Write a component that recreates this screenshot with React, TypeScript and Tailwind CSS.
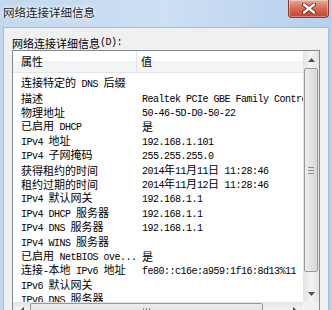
import React from "react";

const rows: [string, string][] = [
  ["连接特定的 DNS 后缀", ""],
  ["描述", "Realtek PCIe GBE Family Controller"],
  ["物理地址", "50-46-5D-D0-50-22"],
  ["已启用 DHCP", "是"],
  ["IPv4 地址", "192.168.1.101"],
  ["IPv4 子网掩码", "255.255.255.0"],
  ["获得租约的时间", "2014年11月11日 11:28:46"],
  ["租约过期的时间", "2014年11月12日 11:28:46"],
  ["IPv4 默认网关", "192.168.1.1"],
  ["IPv4 DHCP 服务器", "192.168.1.1"],
  ["IPv4 DNS 服务器", "192.168.1.1"],
  ["IPv4 WINS 服务器", ""],
  ["已启用 NetBIOS ove...", "是"],
  ["连接-本地 IPv6 地址", "fe80::c16e:a959:1f16:8d13%11"],
  ["IPv6 默认网关", ""],
  ["IPv6 DNS 服务器", ""],
];

function Mixed({ text }: { text: string }) {
  const parts = text.match(/[\u3000-\u9fff\uff00-\uffef]+|[^\u3000-\u9fff\uff00-\uffef]+/g) || [];
  return (
    <>
      {parts.map((p, i) =>
        /[\u3000-\u9fff\uff00-\uffef]/.test(p) ? (
          <span key={i} className="font-['Noto_Sans_CJK_SC',sans-serif] text-[11px]">
            {p}
          </span>
        ) : (
          <span
            key={i}
            className="font-['Liberation_Mono','DejaVu_Sans_Mono',monospace] text-[10px] tracking-[-0.5px] whitespace-pre"
          >
            {p}
          </span>
        )
      )}
    </>
  );
}

function Triangle({ dir }: { dir: "up" | "down" | "left" | "right" }) {
  const pts =
    dir === "up"
      ? "0,4 7,4 3.5,0"
      : dir === "down"
      ? "0,0 7,0 3.5,4"
      : dir === "left"
      ? "4,0 4,7 0,3.5"
      : "0,0 0,7 4,3.5";
  const w = dir === "up" || dir === "down" ? 7 : 4;
  const h = dir === "up" || dir === "down" ? 4 : 7;
  return (
    <svg width={w} height={h} viewBox={`0 0 ${w} ${h}`}>
      <polygon points={pts} fill="#4d4d4d" />
    </svg>
  );
}

export default function App() {
  return (
    <div className="w-[332px] h-[310px] overflow-hidden relative flex flex-col bg-gradient-to-r from-[#c3d8ee] via-[#cde0f4] to-[#b5cfed] font-['Noto_Sans_CJK_SC',sans-serif] text-black">
      {/* title bar */}
      <div className="h-[27px] shrink-0 flex items-center pl-[3px] pb-[1px]">
        <span className="text-[11.5px] leading-none text-[#1b1b1b] [text-shadow:0_0_6px_#ffffff,0_0_3px_#ffffff]">
          网络连接详细信息
        </span>
      </div>
      {/* close button */}
      <div className="absolute top-0 right-[3px] w-[41px] h-[18px] rounded-b-[4px] border border-t-0 border-[#8c3a2c] bg-gradient-to-b from-[#e9a99b] via-[#d46a55] to-[#c2422c] flex items-center justify-center shadow-[inset_0_0_0_1px_rgba(255,255,255,0.35)]">
        <svg width="14" height="11" viewBox="0 0 14 11">
          <path d="M2 1.5 L12 9.5 M12 1.5 L2 9.5" stroke="#5a1a12" strokeWidth="4" strokeLinecap="round" />
          <path d="M2 1.5 L12 9.5 M12 1.5 L2 9.5" stroke="#ffffff" strokeWidth="2.4" strokeLinecap="round" />
        </svg>
      </div>
      {/* body */}
      <div className="flex-1 mx-[3px] border border-b-0 border-[#a7bcd3] bg-[#f0f0f0] pl-[8px] pt-[8px] flex flex-col">
        <div className="h-[14px] flex items-center leading-none">
          <Mixed text="网络连接详细信息(D):" />
        </div>
        {/* list view */}
        <div className="w-[308px] h-[272px] shrink-0 border border-[#828790] bg-white flex flex-col">
          <div className="flex h-[251px]">
            <div className="w-[290px] flex flex-col overflow-hidden">
              {/* header */}
              <div className="h-[22px] shrink-0 flex bg-gradient-to-b from-white from-50% to-[#f3f4f6] to-50% border-b border-[#e3e5e8]">
                <div className="w-[124px] pl-[8px] flex items-center border-r border-[#e3e5e8]">
                  <span className="text-[11px] leading-none">属性</span>
                </div>
                <div className="pl-[4px] flex items-center">
                  <span className="text-[11px] leading-none">值</span>
                </div>
              </div>
              {/* rows */}
              <div className="flex flex-col pt-[1px]">
                {rows.map(([k, v], i) => (
                  <div key={i} className="h-[14.4px] shrink-0 flex items-center leading-none whitespace-nowrap">
                    <div className="w-[124px] shrink-0 pl-[8px]">
                      <Mixed text={k} />
                    </div>
                    <div className="pl-[5px]">
                      <Mixed text={v} />
                    </div>
                  </div>
                ))}
              </div>
            </div>
            {/* vertical scrollbar */}
            <div className="w-[16px] flex flex-col bg-gradient-to-r from-[#e3e3e3] via-[#f4f4f4] to-[#e3e3e3]">
              <div className="h-[17px] flex items-center justify-center">
                <Triangle dir="up" />
              </div>
              <div className="flex-1 px-[1px] flex flex-col">
                <div className="h-[204px] rounded-[2px] border border-[#9a9a9a] bg-gradient-to-r from-[#eeeeee] via-[#e2e2e2] to-[#d8d8d8] flex items-center justify-center">
                  <div className="flex flex-col gap-[2px]">
                    <div className="w-[6px] h-[1px] bg-[#8c8c8c]" />
                    <div className="w-[6px] h-[1px] bg-[#8c8c8c]" />
                    <div className="w-[6px] h-[1px] bg-[#8c8c8c]" />
                  </div>
                </div>
              </div>
              <div className="h-[17px] flex items-center justify-center">
                <Triangle dir="down" />
              </div>
            </div>
          </div>
          {/* horizontal scrollbar */}
          <div className="flex h-[17px]">
            <div className="w-[290px] flex bg-gradient-to-b from-[#e3e3e3] via-[#f4f4f4] to-[#e3e3e3]">
              <div className="w-[17px] flex items-center justify-center">
                <Triangle dir="left" />
              </div>
              <div className="w-[233px] my-[1px] rounded-[2px] border border-[#9a9a9a] bg-gradient-to-b from-[#eeeeee] via-[#e2e2e2] to-[#d8d8d8] flex items-center justify-center">
                <div className="flex gap-[2px]">
                  <div className="w-[1px] h-[6px] bg-[#8c8c8c]" />
                  <div className="w-[1px] h-[6px] bg-[#8c8c8c]" />
                  <div className="w-[1px] h-[6px] bg-[#8c8c8c]" />
                </div>
              </div>
              <div className="flex-1" />
              <div className="w-[17px] flex items-center justify-center">
                <Triangle dir="right" />
              </div>
            </div>
            <div className="w-[16px] bg-[#f0f0f0]" />
          </div>
        </div>
      </div>
    </div>
  );
}
